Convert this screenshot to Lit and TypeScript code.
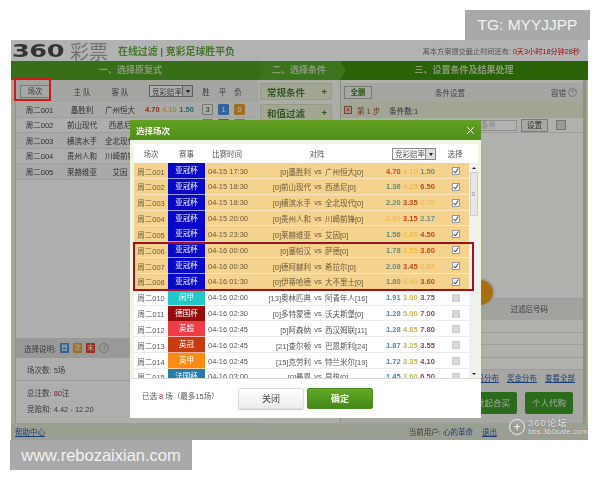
import { LitElement, html, css } from "lit";
import { customElement } from "lit/decorators.js";

type Row = { id: string; league: string; color: string; time: string; home: string; away: string; odds: string[]; tones: string; sel: boolean };

const ROWS: Row[] = [
  { id: "周二001", league: "亚冠杯", color: "#0808c8", time: "04-15 17:30", home: "[0]墨胜利", away: "广州恒大[0]", odds: ["4.70", "4.10", "1.50"], tones: "rlg", sel: true },
  { id: "周二002", league: "亚冠杯", color: "#0808c8", time: "04-15 18:30", home: "[0]前山现代", away: "西悉尼[0]", odds: ["1.36", "4.25", "6.50"], tones: "glr", sel: true },
  { id: "周二003", league: "亚冠杯", color: "#0808c8", time: "04-15 18:30", home: "[0]横滨水手", away: "全北现代[0]", odds: ["2.20", "3.35", "2.70"], tones: "grl", sel: true },
  { id: "周二004", league: "亚冠杯", color: "#0808c8", time: "04-15 20:00", home: "[0]贵州人和", away: "川崎前锋[0]", odds: ["2.90", "3.15", "2.17"], tones: "lrg", sel: true },
  { id: "周二005", league: "亚冠杯", color: "#0808c8", time: "04-15 23:30", home: "[0]莱赫维亚", away: "艾因[0]", odds: ["1.56", "3.85", "4.50"], tones: "glr", sel: true },
  { id: "周二006", league: "亚冠杯", color: "#0808c8", time: "04-16 00:00", home: "[0]塞帕汉", away: "萨德[0]", odds: ["1.78", "3.55", "3.60"], tones: "glr", sel: true },
  { id: "周二007", league: "亚冠杯", color: "#0808c8", time: "04-16 00:30", home: "[0]德阿赫利", away: "希拉尔[0]", odds: ["2.08", "3.45", "2.85"], tones: "grl", sel: true },
  { id: "周二008", league: "亚冠杯", color: "#0808c8", time: "04-16 01:30", home: "[0]伊蒂哈德", away: "大不里士[0]", odds: ["1.80", "3.45", "3.60"], tones: "glr", sel: true },
  { id: "周二010", league: "闲甲", color: "#22c8c8", time: "04-16 02:00", home: "[13]奥林匹典", away: "阿青年人[16]", odds: ["1.91", "3.00", "3.75"], tones: "tam", sel: false },
  { id: "周二011", league: "德国杯", color: "#960c0c", time: "04-16 02:30", home: "[0]多特蒙德", away: "沃夫斯堡[0]", odds: ["1.28", "5.00", "7.00"], tones: "tam", sel: false },
  { id: "周二012", league: "英超", color: "#f03c46", time: "04-16 02:45", home: "[5]阿森纳", away: "西汉姆联[11]", odds: ["1.28", "4.65", "7.80"], tones: "tam", sel: false },
  { id: "周二013", league: "英冠", color: "#c83a10", time: "04-16 02:45", home: "[21]查尔顿", away: "巴恩斯利[24]", odds: ["1.87", "3.25", "3.55"], tones: "tam", sel: false },
  { id: "周二014", league: "英甲", color: "#fa8c14", time: "04-16 02:45", home: "[15]克劳利", away: "特兰米尔[19]", odds: ["1.72", "3.35", "4.10"], tones: "tam", sel: false },
  { id: "周二015", league: "法国杯", color: "#2a7ca8", time: "04-16 03:00", home: "[0]曼恩", away: "昂热[0]", odds: ["1.45", "3.60", "6.50"], tones: "tam", sel: false },
];

const LEFT = [
  ["周二001", "墨胜利", "广州恒大", "4.70", "4.10", "1.50"],
  ["周二002", "前山现代", "西悉尼", "1.36", "4.25", "6.50"],
  ["周二003", "横滨水手", "全北现代", "2.20", "3.35", "2.70"],
  ["周二004", "贵州人和", "川崎前锋", "2.90", "3.15", "2.17"],
  ["周二005", "莱赫维亚", "艾因", "1.56", "3.85", "4.50"],
];

@customElement("app-root")
export class AppRoot extends LitElement {
  static styles = css`
    :host {
      display: block;
      width: 600px;
      height: 480px;
      position: relative;
      overflow: hidden;
      background: #fff;
      font-family: "Liberation Sans", "Noto Sans CJK SC", sans-serif;
      font-size: 7.5px;
      color: #444;
    }
    .shot {
      position: absolute;
      left: 11px;
      top: 40px;
      width: 577px;
      height: 400px;
      background: #fff;
      display: flex;
      flex-direction: column;
      filter: blur(0.35px);
    }
    .head {
      height: 21px;
      display: flex;
      align-items: center;
      padding: 0 8px 0 1px;
    }
    .n360 {
      font-family: "DejaVu Sans", sans-serif;
      font-weight: 700;
      font-size: 18px;
      color: #4a4a4a;
      display: inline-block;
      width: 54px;
      transform: scaleX(1.42);
      transform-origin: left center;
      letter-spacing: -0.3px;
    }
    .cai { font-size: 19px; color: #a4a4a4; margin-left: 4px; width: 48px; white-space: nowrap; }
    .tag { font-size: 9.9px; font-weight: 700; color: #62a83e; white-space: nowrap; }
    .count { margin-left: auto; font-size: 7.2px; color: #777; white-space: nowrap; }
    .count b { color: #d81010; font-weight: 400; }
    .band {
      height: 19px;
      display: grid;
      grid-template-columns: 247px 82px 1fr;
      color: #c6dcb0;
      font-size: 9px;
      font-weight: 700;
      text-align: center;
      line-height: 19px;
    }
    .band div { position: relative; }
    .s1 { background: #4fa024; padding-right: 8px; }
    .s2 { background: #56a62a; }
    .s3 { background: #3c8f0a; }
    .s1::after, .s2::after {
      content: "";
      position: absolute;
      right: -6px;
      top: 0;
      width: 6px;
      height: 19px;
      background: inherit;
      clip-path: polygon(0 0, 100% 50%, 0 100%);
      z-index: 1;
    }
    .main {
      flex: 1;
      display: grid;
      grid-template-columns: 243px 82px 1fr;
      gap: 0;
      padding: 0 2px 0 4px;
      background: #e8efdc;
      min-height: 0;
    }
    .left { background: #fafaf8; display: flex; flex-direction: column; border-left: 1px solid #c8d4b4; }
    .lhead {
      height: 22px;
      background: #ebebe6;
      display: grid;
      grid-template-columns: 47px 38px 38px 58px 18px 15px 16px;
      align-items: center;
      text-align: center;
      color: #555;
    }
    .btn {
      background: #f0f0ec;
      border: 1px solid #b0b0a8;
      height: 13px;
      line-height: 12px;
      box-sizing: border-box;
      width: 30px;
      margin-left: 4px;
      text-align: center;
    }
    .sel {
      border: 1px solid #888;
      background: #fff;
      height: 12px;
      box-sizing: border-box;
      display: flex;
      align-items: center;
      justify-content: space-between;
      padding-left: 2px;
      font-size: 7.5px;
      width: 44px;
      white-space: nowrap;
    }
    .lhead .sel { margin-left: 10px; }
    .sel i {
      width: 9px;
      height: 10px;
      flex: none;
      background: #ddd;
      border-left: 1px solid #888;
      display: flex;
      align-items: center;
      justify-content: center;
    }
    .sel i::after { content: ""; border: 2.5px solid transparent; border-top: 3px solid #222; margin-top: 3px; }
    .lrows { display: flex; flex-direction: column; }
    .lrow {
      height: 15.5px;
      display: grid;
      grid-template-columns: 47px 38px 38px 58px 1fr;
      align-items: center;
      text-align: center;
      font-size: 7.5px;
      background: #f3f3ef;
      border-bottom: 1px solid #e4e4de;
      box-sizing: border-box;
    }
    .lrow:nth-child(even) { background: #fafaf6; }
    .lodds { display: flex; gap: 2.5px; padding-left: 6px; font-weight: 700; font-size: 7.5px; }
    .lbtns { display: flex; gap: 5px; padding-left: 5px; }
    .lbtns span { width: 11px; height: 11px; line-height: 11px; color: #fff; border-radius: 1px; text-align: center; }
    .lbtns .o { background: #f4f4f0; border: 1px solid #aaa; color: #444; width: 9px; height: 9px; line-height: 9px; }
    .lbtns .b { background: #4a90e0; }
    .lbtns .y { background: #e8a030; }
    .lfill { flex: 1; }
    .legend {
      height: 20px;
      background: #dcdcda;
      display: flex;
      align-items: center;
      gap: 4px;
      padding-left: 8px;
      color: #555;
    }
    .legend span { width: 9px; height: 10px; color: #fff; text-align: center; line-height: 10px; border-radius: 1px; font-size: 7px; }
    .legend .q { width: 8px; height: 8px; line-height: 8px; border-radius: 50%; background: none; border: 1px solid #aaa; color: #999; }
    .lcount { height: 23px; display: flex; align-items: center; padding-left: 11px; border-bottom: 1px solid #ddd; color: #555; box-sizing: border-box; }
    .ltotal { height: 42px; box-sizing: border-box; display: flex; flex-direction: column; justify-content: center; gap: 5px; padding: 0 0 3px 11px; color: #555; }
    .ltotal b { color: #c02040; font-weight: 400; }
    .mid { display: flex; flex-direction: column; gap: 4px; padding: 3px 8px 0 2px; background: #f6f8f0; }
    .tile {
      height: 17px;
      background: #e8f0d4;
      border: 1px solid #d4e0bc;
      box-sizing: border-box;
      display: flex;
      justify-content: space-between;
      align-items: center;
      padding: 0 4px 0 6px;
      font-size: 9.5px;
      font-weight: 700;
      color: #4a7a30;
      white-space: nowrap;
    }
    .right { background: #fcfcf8; display: flex; flex-direction: column; border: 1px solid #c8d4b4; border-width: 0 3px 0 1px; min-width: 0; }
    .rhead {
      height: 19px;
      margin-top: 3px;
      background: #ecece8;
      display: grid;
      grid-template-columns: 60px 98px 1fr;
      align-items: center;
      text-align: center;
      color: #666;
    }
    .rhead .btn { width: 28px; margin-left: 3px; font-weight: 700; color: #3a7a1a; }
    .help { display: inline-flex; gap: 2px; align-items: center; justify-content: flex-end; padding-right: 6px; }
    .help i { width: 7px; height: 7px; border: 1px solid #aaa; border-radius: 50%; font-style: normal; font-size: 6px; line-height: 7px; color: #999; }
    .step {
      height: 16px;
      background: #e8edd4;
      display: flex;
      align-items: center;
      gap: 5px;
      padding-left: 3px;
      color: #a05830;
    }
    .xb { width: 8px; height: 8px; background: #f4d0c8; border: 1px solid #b06050; box-sizing: border-box; font-size: 7px; line-height: 6px; text-align: center; color: #c02020; }
    .step em { font-style: normal; color: #446; margin-left: 4px; }
    .cond { height: 15px; display: flex; align-items: center; gap: 4px; padding-left: 71px; border-bottom: 1px solid #e4e4dc; box-sizing: border-box; }
    .cond u { width: 105px; height: 11px; border: 1px solid #ccc; background: #fff; display: block; text-decoration: none; color: #bbb; padding-left: 68px; box-sizing: border-box; line-height: 10px; }
    .cond .btn { width: 27px; margin: 0; }
    .cb0 { width: 8px; height: 8px; background: #ddd; border: 1px solid #aaa; margin-left: 4px; }
    .rspace { flex: 1; min-height: 0; display: flex; flex-direction: column; }
    .dial { height: 165px; position: relative; }
    .dial::after {
      content: "";
      position: absolute;
      left: 127px;
      top: 147px;
      width: 25px;
      height: 25px;
      border-radius: 50%;
      background: #f0a018;
      box-shadow: 0 0 0 2px #e4e4e0;
      z-index: 1;
    }
    .result { height: 22px; background: #e8e8e4; text-align: right; padding-right: 35px; line-height: 22px; color: #555; font-size: 7.5px; border-top: 1px solid #ddd; box-sizing: border-box; }
    .lines { display: flex; flex-direction: column; }
    .lines div { height: 12.5px; border-bottom: 1px solid #e2e2dc; box-sizing: border-box; }
    .links { height: 15px; display: flex; gap: 8px; justify-content: flex-end; align-items: center; padding-right: 8px; color: #2c5ca8; text-decoration: underline; background: #eef0e8; }
    .buy { flex: 1; display: flex; justify-content: flex-end; gap: 8px; padding: 7px 10px 0 0; background: #eef0e8; }
    .buy span { width: 48px; height: 22px; background: #3f9a28; color: #e8f4e0; text-align: center; line-height: 22px; font-size: 8.5px; border-radius: 2px; }
    .foot {
      height: 17px;
      background: #dfe4d0;
      display: flex;
      align-items: center;
      padding: 0 4px;
      color: #555;
      gap: 8px;
    }
    .foot a { color: #2c5ca8; text-decoration: underline; }
    .foot .user { margin-left: auto; padding-right: 87px; }
    .foot .user a { text-decoration: none; }
    .foot .user a + a { text-decoration: underline; margin-left: 9px; }
    .veil { position: absolute; left: 11px; top: 40px; width: 577px; height: 400px; background: rgba(0, 0, 0, 0.3); }
    .mark { position: absolute; background: #a9a9a9; color: #f2f2f2; display: flex; align-items: center; justify-content: center; font-weight: 400; }
    .tg { left: 465px; top: 10px; width: 125px; height: 30px; font-size: 15.5px; }
    .www { left: 10px; top: 440px; width: 182px; height: 30px; font-size: 16.5px; }
    .redbox { position: absolute; border: 2px solid #d01818; box-sizing: border-box; left: 14px; top: 78px; width: 37px; height: 23px; }
    .redrows { position: absolute; border: 2px solid #a80f1c; box-sizing: border-box; left: 133px; top: 242px; width: 341px; height: 49px; }
    .bbs { position: absolute; left: 509px; top: 418px; color: #eee; font-size: 7.8px; display: flex; align-items: center; gap: 3px; text-shadow: 0 0 1px #555; }
    .bbs .plus { width: 14px; height: 14px; border: 1.5px solid #eee; border-radius: 50%; text-align: center; line-height: 13px; font-size: 13px; font-weight: 700; }
    .bbs .bt { display: flex; flex-direction: column; line-height: 9px; }
    .bbs .bt b { font-weight: 400; font-size: 9.5px; letter-spacing: 1px; }

    .modal {
      position: absolute;
      left: 130px;
      top: 120px;
      width: 351px;
      height: 298px;
      background: #fff;
      display: flex;
      flex-direction: column;
      filter: blur(0.3px);
    }
    .mtitle {
      height: 20px;
      background: linear-gradient(#63a022, #4f8f1a);
      display: flex;
      justify-content: space-between;
      align-items: center;
      padding: 0 6px 0 6px;
      color: #f4f8ec;
      font-weight: 700;
      font-size: 8.5px;
    }
    .mtitle svg { display: block; }
    .mbody {
      height: 239px;
      padding: 4px 3px 0 4px;
      background: #eef5e0;
      display: flex;
      flex-direction: column;
      box-sizing: border-box;
      border-bottom: 1px solid #d8d8d0;
    }
    .thead {
      height: 19px;
      flex: none;
      background: #fff;
      display: grid;
      grid-template-columns: 34px 37px 44px 54px 74px 61px 34px;
      align-items: center;
      text-align: center;
      color: #555;
      font-size: 7.5px;
    }
    .thead .vs { grid-column: 4 / 6; padding-left: 8px; }
    .thead .sel { margin-left: 15px; }
    .tscroll { flex: 1; display: flex; min-height: 0; background: #fff; }
    .tbody { flex: 1; overflow: hidden; }
    .tr {
      height: 15.85px;
      display: grid;
      grid-template-columns: 34px 37px 50px 56px 14px 58px 58px 1fr;
      align-items: center;
      border-bottom: 1px solid #ececec;
      box-sizing: border-box;
      color: #555;
      font-size: 7.5px;
      background: #fff;
    }
    .tr.on { background: #f5d28e; border-bottom-color: #fae6bc; color: #6a5a3c; }
    .tr > span { white-space: nowrap; }
    .c { text-align: center; }
    .league { color: #fff; height: 100%; line-height: 15px; text-align: center; border-bottom: 1px solid rgba(255,255,255,.6); box-sizing: border-box; }
    .time { padding-left: 3px; }
    .home { text-align: right; }
    .vs2 { text-align: center; }
    .odds { display: flex; gap: 2.5px; font-size: 7.5px; font-weight: 700; padding-left: 3px; }
    .r { color: #c84818; }
    .l { color: #ecc050; }
    .g { color: #668f80; }
    .t { color: #3f8ea4; font-weight: 700; }
    .a { color: #c8b458; }
    .m { color: #8c4a52; }
    .box {
      width: 8px;
      height: 8px;
      border: 1px solid #999;
      background: #f8f8f8;
      box-sizing: border-box;
      display: flex;
      align-items: center;
      justify-content: center;
    }
    .tr .box { margin-left: 11px; }
    .box.off { background: #d8d8d8; border-color: #ccc; }
    .box svg { display: block; }
    .sbar { width: 9px; flex: none; background: #f0f0f0; display: flex; flex-direction: column; align-items: center; }
    .sbar .up, .sbar .dn { height: 9px; width: 9px; display: flex; align-items: center; justify-content: center; }
    .sbar .up::after { content: ""; border: 2px solid transparent; border-bottom: 2.5px solid #222; margin-top: -2px; }
    .sbar .dn::after { content: ""; border: 2px solid transparent; border-top: 2.5px solid #222; margin-top: 2px; }
    .sbar .dn { margin-top: auto; }
    .sbar .thumb { width: 8px; height: 44px; background: #e6e6e6; border: 1px solid #ccc; box-sizing: border-box; display: flex; align-items: center; justify-content: center; color: #888; font-size: 6px; }
    .mfoot { flex: 1; display: flex; align-items: flex-start; padding: 9px 0 0 12px; color: #555; font-size: 7.5px; }
    .mfoot .msg { width: 96px; padding-top: 2px; white-space: nowrap; }
    .mfoot b { color: #b02040; font-weight: 400; }
    .mbtn { width: 66px; height: 21px; text-align: center; line-height: 20px; font-size: 9px; border-radius: 2px; box-sizing: border-box; }
    .close { background: linear-gradient(#fff, #ececec); border: 1px solid #ddd; color: #444; margin-right: 3px; box-shadow: 0 1px 1px #ccc; }
    .ok { background: linear-gradient(#62a824, #44881a); border: 1px solid #4b8a20; color: #f0f8e0; font-weight: 700; }
  `;

  private check() {
    return html`<svg width="6" height="6" viewBox="0 0 6 6"><path d="M0.8 3 L2.4 5 L5.2 0.6" fill="none" stroke="#333" stroke-width="1"/></svg>`;
  }

  render() {
    return html`
      <div class="shot">
        <div class="head">
          <span class="n360">360</span><span class="cai">彩票</span>
          <span class="tag">在线过滤 | 竞彩足球胜平负</span>
          <span class="count">离本方案提交截止时间还有: <b>0天3小时18分钟28秒</b></span>
        </div>
        <div class="band">
          <div class="s1">一、选择原复式</div>
          <div class="s2">二、选择条件</div>
          <div class="s3">三、设置条件及结果处理</div>
        </div>
        <div class="main">
          <div class="left">
            <div class="lhead">
              <div class="btn">场次</div><span>主 队</span><span>客 队</span>
              <div class="sel">竞彩赔率<i></i></div>
              <span>胜</span><span>平</span><span>负</span>
            </div>
            <div class="lrows">
              ${LEFT.map(
                (r) => html`<div class="lrow">
                  <span>${r[0]}</span><span>${r[1]}</span><span>${r[2]}</span>
                  <span class="lodds"><span class="r">${r[3]}</span><span class="l">${r[4]}</span><span class="t">${r[5]}</span></span>
                  <span class="lbtns"><span class="o">3</span><span class="b">1</span><span class="y">0</span></span>
                </div>`
              )}
            </div>
            <div class="lfill"></div>
            <div class="legend">选择说明: <span style="background:#4a8ad0">首</span><span style="background:#e0a030">次</span><span style="background:#d84028">末</span><span class="q">?</span></div>
            <div class="lcount">场次数: 5场</div>
            <div class="ltotal"><div>总注数: <b>80</b>注</div><div>竞赔和: 4.42 - 12.20</div></div>
          </div>
          <div class="mid">
            <div class="tile">常规条件<span>+</span></div>
            <div class="tile">和值过滤<span>+</span></div>
          </div>
          <div class="right">
            <div class="rhead"><div class="btn">全删</div><span>条件设置</span><span class="help">容错 <i>?</i></span></div>
            <div class="step"><span class="xb">×</span><span>第 1 步</span><em>条件数:1</em></div>
            <div class="cond"><u>条件</u><div class="btn">设置</div><span class="cb0"></span></div>
            <div class="rspace">
              <div class="dial"></div>
              <div class="result">过滤后号码</div>
              <div class="lines"><div></div><div></div><div></div><div></div></div>
              <div class="links"><span>号码分布</span><span>奖金分布</span><span>查看全部</span></div>
              <div class="buy"><span>发起合买</span><span>个人代购</span></div>
            </div>
          </div>
        </div>
        <div class="foot">
          <a>帮助中心</a>
          <span class="user">当前用户: <a>心的革命</a><a>退出</a></span>
        </div>
      </div>
      <div class="veil"></div>
      <div class="bbs"><span class="plus">+</span><span class="bt"><b>360论坛</b><span>bbs.360safe.com</span></span></div>
      <div class="redbox"></div>
      <div class="modal">
        <div class="mtitle">选择场次
          <svg width="9" height="9" viewBox="0 0 9 9"><path d="M1 1 L8 8 M8 1 L1 8" stroke="#eaf4d8" stroke-width="1"/></svg>
        </div>
        <div class="mbody">
          <div class="thead">
            <span>场次</span><span>赛事</span><span>比赛时间</span><span class="vs">对阵</span>
            <div class="sel">竞彩赔率<i></i></div><span>选择</span>
          </div>
          <div class="tscroll">
            <div class="tbody">
              ${ROWS.map(
                (r) => html`<div class="tr ${r.sel ? "on" : ""}">
                  <span class="c">${r.id}</span>
                  <span class="league" style="background:${r.color}">${r.league}</span>
                  <span class="time">${r.time}</span>
                  <span class="home">${r.home}</span>
                  <span class="vs2">vs</span>
                  <span>${r.away}</span>
                  <span class="odds">${r.odds.map((o, i) => html`<span class="${r.tones[i]}">${o}</span>`)}</span>
                  <span class="box ${r.sel ? "" : "off"}">${r.sel ? this.check() : ""}</span>
                </div>`
              )}
            </div>
            <div class="sbar"><span class="up"></span><span class="thumb">≡</span><span class="dn"></span></div>
          </div>
        </div>
        <div class="mfoot">
          <span class="msg">已选 <b>8</b> 场（最多15场）</span>
          <div class="mbtn close">关闭</div>
          <div class="mbtn ok">确定</div>
        </div>
      </div>
      <div class="redrows"></div>
      <div class="mark tg">TG: MYYJJPP</div>
      <div class="mark www">www.rebozaixian.com</div>
    `;
  }
}
